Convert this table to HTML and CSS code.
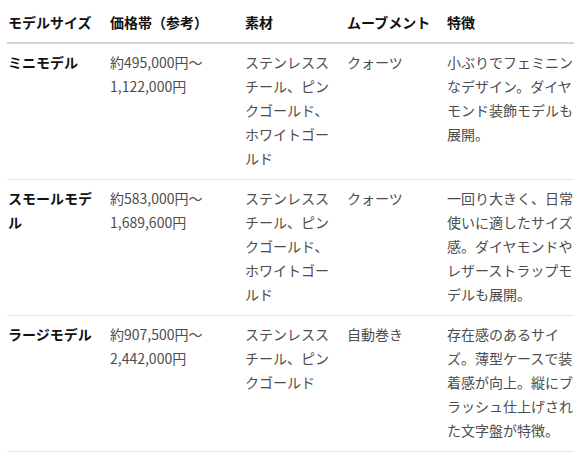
FILE: index.html
```html
<!DOCTYPE html>
<html lang="ja">
<head>
<meta charset="utf-8">
<link rel="stylesheet" href="styles.css">
</head>
<body>
<div class="wrap">
<table class="spec">
  <colgroup>
    <col class="c1"><col class="c2"><col class="c3"><col class="c4"><col class="c5">
  </colgroup>
  <thead>
    <tr>
      <th>モデルサイズ</th>
      <th>価格帯（参考）</th>
      <th>素材</th>
      <th>ムーブメント</th>
      <th>特徴</th>
    </tr>
  </thead>
  <tbody>
    <tr>
      <td class="name">ミニモデル</td>
      <td>約495,000円〜<wbr>1,122,000円</td>
      <td>ステンレススチール、ピンクゴールド、ホワイトゴールド</td>
      <td>クォーツ</td>
      <td>小ぶりでフェミニンなデザイン。ダイヤモンド装飾モデルも展開。</td>
    </tr>
    <tr>
      <td class="name">スモールモデル</td>
      <td>約583,000円〜<wbr>1,689,600円</td>
      <td>ステンレススチール、ピンクゴールド、ホワイトゴールド</td>
      <td>クォーツ</td>
      <td>一回り大きく、日常使いに適したサイズ感。ダイヤモンドやレザーストラップモデルも展開。</td>
    </tr>
    <tr>
      <td class="name">ラージモデル</td>
      <td>約907,500円〜<wbr>2,442,000円</td>
      <td>ステンレススチール、ピンクゴールド</td>
      <td>自動巻き</td>
      <td>存在感のあるサイズ。薄型ケースで装着感が向上。縦にブラッシュ仕上げされた文字盤が特徴。</td>
    </tr>
  </tbody>
</table>
</div>
</body>
</html>
```

FILE: styles.css
```css
html, body {
  margin: 0;
  padding: 0;
  background: #ffffff;
}

.wrap {
  padding: 2px 0 0 7px;
}

.spec {
  border-collapse: collapse;
  table-layout: fixed;
  width: 567px;
  font-family: "Noto Sans CJK JP", "Noto Sans", sans-serif;
  font-size: 14px;
  line-height: 24px;
  color: #4d4d4d;
}

.c1 { width: 102px; }
.c2 { width: 135px; }
.c3 { width: 102px; }
.c4 { width: 100px; }
.c5 { width: 128px; }

.spec th,
.spec td {
  text-align: left;
  vertical-align: top;
  padding: 6px 16px 9px 1px;
}

.spec th {
  padding-top: 8px;
  padding-bottom: 8px;
}

.spec th:last-child,
.spec td:last-child {
  padding-right: 0;
}

.spec th {
  font-weight: 700;
  color: #111111;
  white-space: nowrap;
  border-bottom: 2px solid #d6d6d6;
}

.spec td {
  border-bottom: 1px solid #e6e6e6;
}

.spec td.name {
  font-weight: 700;
  color: #111111;
}
```
